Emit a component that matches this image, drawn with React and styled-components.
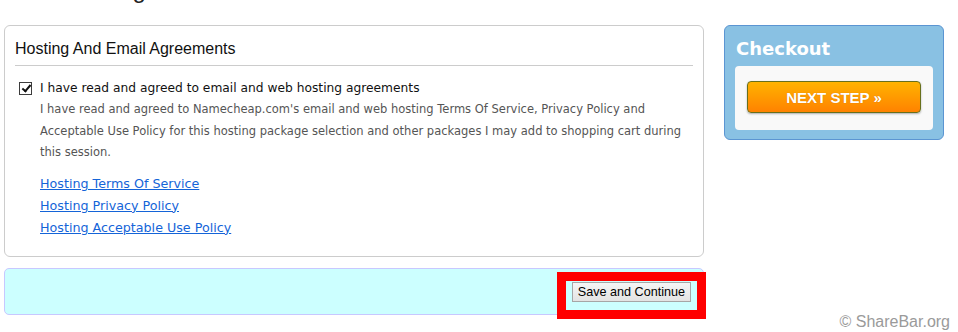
import React from "react";
import styled, { createGlobalStyle } from "styled-components";

const GlobalStyle = createGlobalStyle`
  html, body {
    margin: 0;
    padding: 0;
    background: #fff;
    overflow: hidden;
  }
  body {
    font-family: "DejaVu Sans", Verdana, sans-serif;
  }
`;

const links = [
  "Hosting Terms Of Service",
  "Hosting Privacy Policy",
  "Hosting Acceptable Use Policy",
];

const App = () => {
  return (
    <>
      <GlobalStyle />
      <Page>
        <MainColumn>
          <PageTitle>Add Hosting</PageTitle>

          <Panel>
            <PanelHeading>Hosting And Email Agreements</PanelHeading>

            <AgreeRow>
              <input type="checkbox" defaultChecked />
              <span>I have read and agreed to email and web hosting agreements</span>
            </AgreeRow>
            <Description>
              I have read and agreed to Namecheap.com's email and web hosting
              Terms Of Service, Privacy Policy and Acceptable Use Policy for this
              hosting package selection and other packages I may add to shopping
              cart during this session.
            </Description>

            <LinkList>
              {links.map((l) => (
                <li key={l}>
                  <a href="#">{l}</a>
                </li>
              ))}
            </LinkList>
          </Panel>

          <ActionBar>
            <Highlight>
              <SaveButton type="button">Save and Continue</SaveButton>
            </Highlight>
          </ActionBar>
        </MainColumn>

        <Sidebar>
          <CheckoutBox>
            <CheckoutTitle>Checkout</CheckoutTitle>
            <CheckoutInner>
              <NextStep type="button">NEXT STEP »</NextStep>
            </CheckoutInner>
          </CheckoutBox>
        </Sidebar>
      </Page>
      <Watermark>© ShareBar.org</Watermark>
    </>
  );
};

const Page = styled.div`
  display: flex;
  gap: 20px;
  padding-left: 4px;
  width: 958px;
  height: 332px;
  box-sizing: border-box;
`;

const MainColumn = styled.div`
  width: 700px;
  display: flex;
  flex-direction: column;
`;

// page heading, scrolled mostly out of view
const PageTitle = styled.h1`
  margin: -22px 0 23px 11px;
  font-family: "Liberation Sans", Arial, sans-serif;
  font-size: 24px;
  line-height: 24px;
  font-weight: normal;
  color: #222;
  height: 24px;
`;

const Panel = styled.div`
  border: 1px solid #cccccc;
  border-radius: 6px;
  padding: 14px 10px 19px;
  height: 232px;
  box-sizing: border-box;
`;

const PanelHeading = styled.h2`
  margin: 0;
  padding-bottom: 7px;
  border-bottom: 1px solid #cccccc;
  font-family: "Liberation Sans", Arial, sans-serif;
  font-size: 16px;
  line-height: 18px;
  font-weight: normal;
  color: #111;
`;

const AgreeRow = styled.label`
  display: flex;
  align-items: center;
  gap: 8px;
  margin-top: 14px;
  padding-left: 4px;
  font-size: 12.25px;
  line-height: 16px;
  color: #111;

  & input {
    appearance: none;
    position: relative;
    margin: 0;
    width: 13px;
    height: 13px;
    box-sizing: border-box;
    border: 1px solid #3c3c3c;
    background: #fff;
  }

  & input:checked::after {
    content: "";
    position: absolute;
    left: 3.5px;
    top: 0.5px;
    width: 3px;
    height: 7px;
    border: solid #111;
    border-width: 0 2px 2px 0;
    transform: rotate(40deg);
  }
`;

const Description = styled.p`
  margin: 3px 0 0 25px;
  width: 650px;
  font-size: 11.5px;
  line-height: 21.5px;
  color: #555;
`;

const LinkList = styled.ul`
  list-style: none;
  margin: 9px 0 0 25px;
  padding: 0;
  font-size: 12.7px;
  line-height: 22px;

  & a {
    color: #1464d8;
    text-decoration: underline;
  }
`;

const ActionBar = styled.div`
  margin-top: 11px;
  height: 47px;
  box-sizing: border-box;
  background: #ccffff;
  border: 1px solid #c8c8ff;
  border-radius: 5px;
  display: flex;
  justify-content: flex-end;
  align-items: center;
  padding-right: 12px;
`;

// red annotation frame drawn over the screenshot
const Highlight = styled.div`
  position: relative;
  display: flex;

  &::after {
    content: "";
    position: absolute;
    left: -15px;
    right: -15px;
    top: -10px;
    bottom: -17px;
    border: 9px solid #ff0000;
    pointer-events: none;
  }
`;

const SaveButton = styled.button`
  height: 20px;
  padding: 0 5px;
  margin: 0;
  font-family: "Liberation Sans", Arial, sans-serif;
  font-size: 12.6px;
  color: #000;
  background: linear-gradient(#f5f5f5, #e3e3e3);
  border: 1px solid #a6a6a6;
  border-radius: 0;
`;

const Sidebar = styled.div`
  width: 220px;
  padding-top: 25px;
`;

const CheckoutBox = styled.div`
  height: 115px;
  box-sizing: border-box;
  background: #89c1e3;
  border: 1px solid #5b95d2;
  border-radius: 6px;
  padding: 12px 10px 10px;
`;

const CheckoutTitle = styled.div`
  margin: 0 0 6px 1px;
  font-size: 18px;
  line-height: 22px;
  font-weight: bold;
  color: #fff;
`;

const CheckoutInner = styled.div`
  background: #f9f9f9;
  border-radius: 4px;
  padding: 15px 12px 17px;
`;

const NextStep = styled.button`
  display: block;
  width: 100%;
  height: 32px;
  margin: 0;
  font-family: "Liberation Sans", Arial, sans-serif;
  font-size: 15px;
  font-weight: bold;
  color: #fff;
  text-shadow: 0 0 1px rgba(160, 80, 0, 0.5);
  background: linear-gradient(#ffb300, #ff8200);
  border: 1px solid #67701c;
  border-radius: 4px;
  box-shadow: 0 1px 2px rgba(0, 0, 0, 0.3);
`;

const Watermark = styled.div`
  position: absolute;
  right: 8px;
  bottom: 1px;
  font-family: "Liberation Sans", Arial, sans-serif;
  font-size: 16px;
  color: #9a9a9a;
`;

export default App;
